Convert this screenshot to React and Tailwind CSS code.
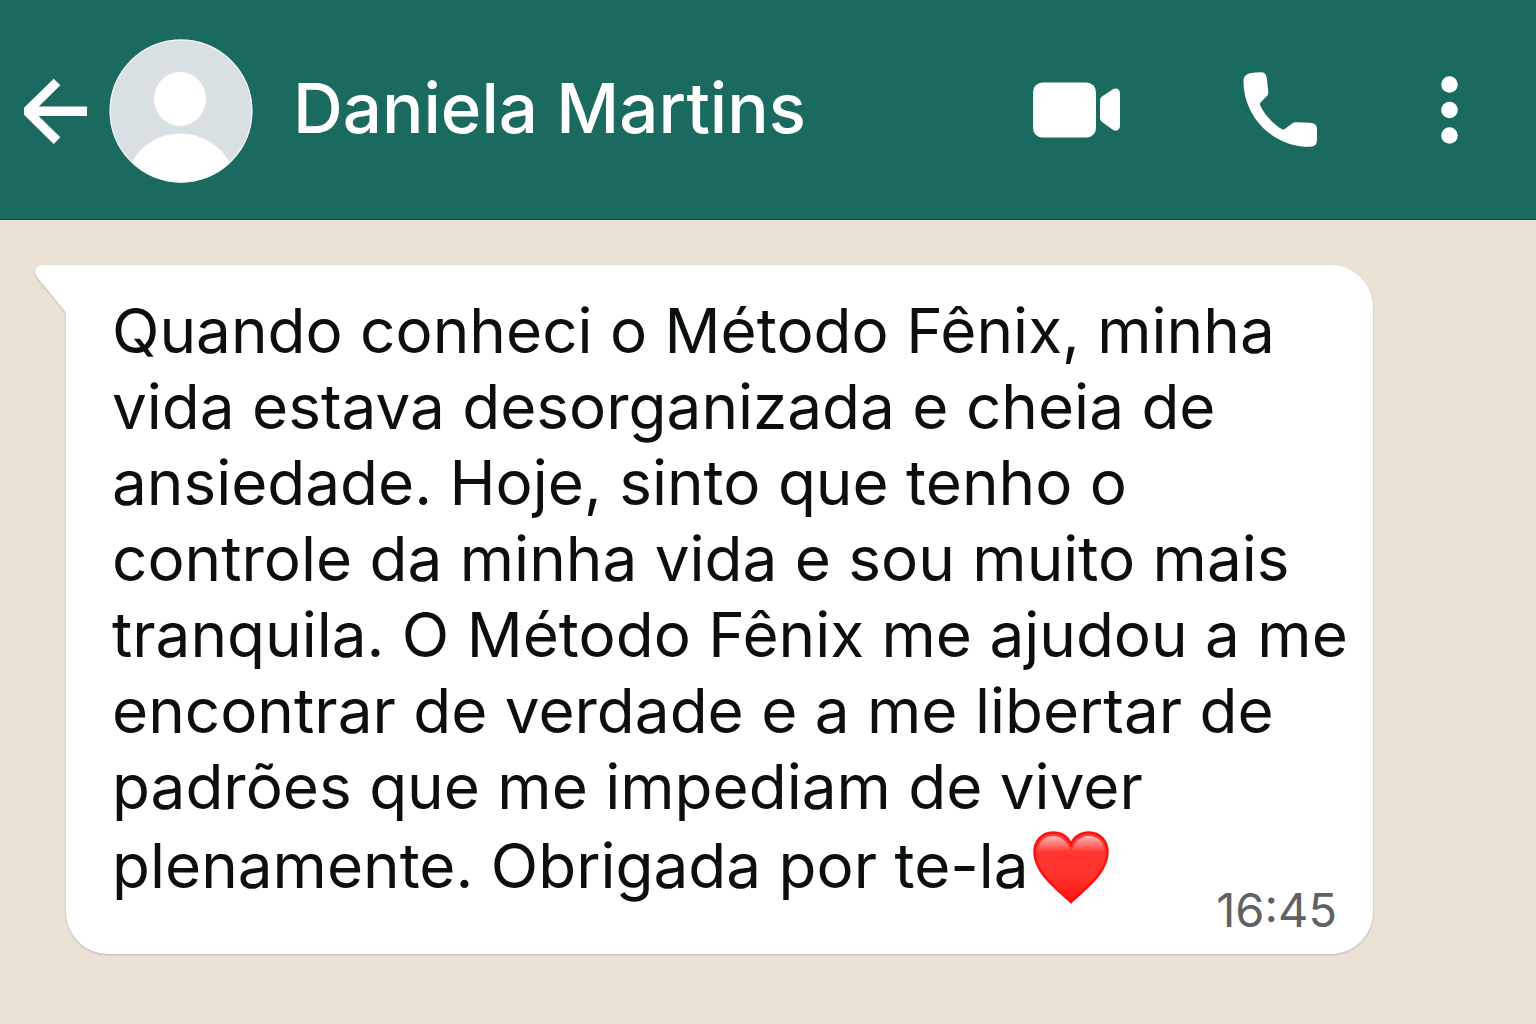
const message =
    "Quando conheci o Método Fênix, minha vida estava desorganizada e cheia de ansiedade. Hoje, sinto que tenho o controle da minha vida e sou muito mais tranquila. O Método Fênix me ajudou a me encontrar de verdade e a me libertar de padrões que me impediam de viver plenamente. Obrigada por te-la";

function BackIcon() {
    return (
        <svg
            viewBox="0 0 64 66"
            className="w-16 h-[66px]"
            fill="none"
            stroke="currentColor"
            strokeWidth="9.4"
            strokeLinejoin="bevel"
            aria-hidden="true"
        >
            <path d="M33 4 3.2 33.3 33 62.7M6 33.3H63" />
        </svg>
    );
}

function Avatar() {
    return (
        <svg
            viewBox="0 0 144 144"
            className="size-36 shrink-0 ml-[21px]"
            aria-hidden="true"
        >
            <clipPath id="avatarClip">
                <circle cx="72" cy="72" r="71.5" />
            </clipPath>
            <g clipPath="url(#avatarClip)">
                <rect width="144" height="144" fill="#d8e0e3" />
                <ellipse cx="71" cy="60" rx="26" ry="27" fill="#fff" />
                <circle cx="71.5" cy="150.5" r="56" fill="#fff" />
            </g>
            <circle
                cx="72"
                cy="72"
                r="70.8"
                fill="none"
                stroke="#f1f4f6"
                strokeWidth="1.2"
            />
        </svg>
    );
}

function VideoIcon() {
    return (
        <svg
            viewBox="0 0 88 56"
            className="w-[88px] h-14"
            fill="currentColor"
            aria-hidden="true"
        >
            <rect x="1" y="0.5" width="63" height="55" rx="9.5" />
            <path d="M70 14.5 80.5 7.5C84 5.2 88 6.5 88 11.5V43.5C88 48.5 84 50 80.5 47.5L70 40Q68 38.5 68 36V18.500Q68 16 70 14.500Z" />
        </svg>
    );
}

function PhoneIcon() {
    return (
        <svg
            viewBox="0 0 75 76"
            className="w-[75px] h-[76px]"
            fill="currentColor"
            aria-hidden="true"
        >
            <path d="M6 1.500Q12 .300 18 .300Q23 .300 23.800 6L25.300 20Q25.500 22.500 23.700 24.300L17.500 30.500Q16.500 31.800 17.300 33.500C21.500 43 30 51.500 38.500 57Q40.200 58.200 41.800 57L49 51.500Q51 50.200 53 50.200L67 50.800Q74 50.800 74 57.500V68Q74 74.800 67 74.800C28 74.800 0 43 .500 8Q.900 3 6 1.500Z" />
        </svg>
    );
}

function MoreIcon() {
    return (
        <svg
            viewBox="0 0 17 68"
            className="w-[17px] h-[68px]"
            fill="currentColor"
            aria-hidden="true"
        >
            <circle cx="8.5" cy="8.5" r="8.3" />
            <circle cx="8.5" cy="34" r="8.3" />
            <circle cx="8.5" cy="59.5" r="8.3" />
        </svg>
    );
}

function Heart() {
    return (
        <svg
            viewBox="0 0 76 73"
            className="inline w-[76px] h-[73px] mt-1.5 ml-1 align-[-16px]"
            role="img"
            aria-label="coração"
        >
            <defs>
                <linearGradient id="heartFill" x1="0" y1="0" x2="0" y2="1">
                    <stop offset="0" stopColor="#ff3b35" />
                    <stop offset="0.6" stopColor="#ff332d" />
                    <stop offset="1" stopColor="#ff1414" />
                </linearGradient>
                <linearGradient id="heartShine" x1="0" y1="0" x2="0" y2="1">
                    <stop offset="0" stopColor="#fff" stopOpacity="0.65" />
                    <stop offset="1" stopColor="#fff" stopOpacity="0" />
                </linearGradient>
            </defs>
            <path
                d="M38 13C34.500 5.500 27.500 1.500 20 1.500 9 1.500 1.500 10 1.500 21 1.500 40 20 55 38 71 56 55 74.500 40 74.500 21 74.500 10 67 1.500 56 1.500 48.500 1.500 41.500 5.500 38 13Z"
                fill="url(#heartFill)"
                stroke="#fc1010"
                strokeWidth="2.5"
            />
            <path
                d="M4.500 21C5 10 12 5 20 5S34 10 37 19ZM71.500 21C71 10 64 5 56 5S42 10 39 19Z"
                fill="url(#heartShine)"
            />
        </svg>
    );
}

function ChatHeader({ name }) {
    return (
        <header className="h-[220px] pt-[3px] pl-6 pr-[78px] bg-[#1b6a60] border-b border-[#0f5148] text-white flex items-center">
            <button type="button" aria-label="Voltar">
                <BackIcon />
            </button>
            <Avatar />
            <h1 className="ml-10 pb-1 flex-1 text-[69px] font-medium whitespace-nowrap">
                {name}
            </h1>
            <div className="pb-[3px] flex items-center gap-[123px]">
                <button type="button" aria-label="Chamada de vídeo">
                    <VideoIcon />
                </button>
                <button type="button" aria-label="Chamada de voz">
                    <PhoneIcon />
                </button>
                <button type="button" aria-label="Mais opções">
                    <MoreIcon />
                </button>
            </div>
        </header>
    );
}

function MessageBubble({ text, time }) {
    return (
        <article className="relative bg-white rounded-[42px] rounded-tl-none pt-7 pb-7 pl-[46px] pr-4 drop-shadow-[0_1px_1px_rgba(120,100,70,0.35)]">
            <svg
                viewBox="0 0 32 48"
                className="absolute top-0 -left-[31px] w-8 h-12"
                fill="#fff"
                aria-hidden="true"
            >
                <path d="M32 0H9C1 0-2 6 2 12L31 47.500H32Z" />
            </svg>
            <p className="text-[62px] leading-[76px] text-[#0b0f10]">
                {text}
                <Heart />
            </p>
            <time className="block -mt-2.5 pr-5 text-right text-[47px] leading-8 text-[#5f6163]">
                {time}
            </time>
        </article>
    );
}

export default function App() {
    return (
        <div className="min-h-screen bg-[#eae2d5] font-['Inter',sans-serif]">
            <ChatHeader name="Daniela Martins" />
            <main className="pt-[45px] pb-16 pl-[66px] pr-[163px]">
                <MessageBubble text={message} time="16:45" />
            </main>
        </div>
    );
}
